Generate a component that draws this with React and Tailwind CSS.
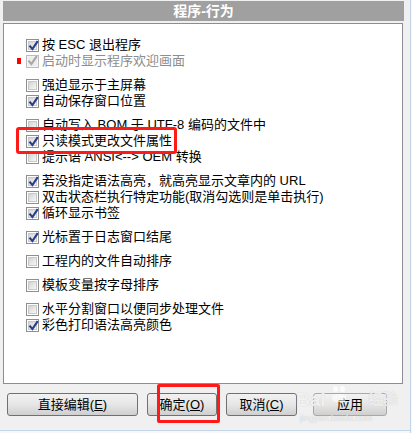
import React from 'react';

const FONT = { fontFamily: '"Liberation Sans", "Noto Sans CJK SC", sans-serif' };

const groups = [
  [
    { label: '按 ESC 退出程序', checked: true },
    { label: '启动时显示程序欢迎画面', checked: true, disabled: true, marker: true },
  ],
  [
    { label: '强迫显示于主屏幕', checked: false },
    { label: '自动保存窗口位置', checked: true },
  ],
  [
    { label: '自动写入 BOM 于 UTF-8 编码的文件中', checked: false },
    { label: '只读模式更改文件属性', checked: true },
    { label: '提示语 ANSI<--> OEM 转换', checked: false },
  ],
  [
    { label: '若没指定语法高亮，就高亮显示文章内的 URL', checked: true },
    { label: '双击状态栏执行特定功能(取消勾选则是单击执行)', checked: false },
    { label: '循环显示书签', checked: true },
  ],
  [{ label: '光标置于日志窗口结尾', checked: true }],
  [{ label: '工程内的文件自动排序', checked: false }],
  [{ label: '模板变量按字母排序', checked: false }],
  [
    { label: '水平分割窗口以便同步处理文件', checked: false },
    { label: '彩色打印语法高亮颜色', checked: true },
  ],
];

function CheckBox({ checked, disabled }) {
  return (
    <div
      className={`w-[13px] h-[13px] border flex items-center justify-center shrink-0 ${
        disabled ? 'border-[#bcbcbc] bg-[#f4f4f4]' : 'border-[#8e8f8f] bg-white'
      }`}
    >
      <div
        className={`w-[9px] h-[9px] relative ${
          disabled
            ? 'bg-[#ececec]'
            : 'bg-gradient-to-br from-[#d3d3d3] to-[#f8f8f8] border border-[#c9c9c9]'
        }`}
      >
        {checked && (
          <svg
            viewBox="0 0 9 9"
            className="absolute left-[-1px] top-[-2px] w-[11px] h-[11px]"
          >
            <path
              d="M1.2 4.6 L3.6 7.4 L8 1"
              fill="none"
              stroke={disabled ? '#a8a8a8' : '#2a3f8f'}
              strokeWidth="1.8"
            />
          </svg>
        )}
      </div>
    </div>
  );
}

function Row({ item }) {
  return (
    <div className="h-[16px] flex items-center relative">
      {item.marker && (
        <div className="absolute left-[-9px] top-[5px] w-[4px] h-[6px] bg-[#ff0000]" />
      )}
      <CheckBox checked={item.checked} disabled={item.disabled} />
      <span
        className={`ml-[3px] text-[13px] leading-[16px] whitespace-nowrap ${
          item.disabled ? 'text-[#8d8d8d]' : 'text-black'
        }`}
      >
        {item.label}
      </span>
    </div>
  );
}

function Btn({ width, label, hotkey, className = '' }) {
  return (
    <button
      className={`h-[23px] rounded-[3px] border border-[#707070] bg-gradient-to-b from-[#f2f2f2] via-[#e6e6e6] to-[#cfcfcf] text-[13px] leading-[16px] text-black flex items-center justify-center ${width} ${className}`}
    >
      {label}
      {hotkey && (
        <>
          (<span className="underline underline-offset-1">{hotkey}</span>)
        </>
      )}
    </button>
  );
}

export default function App() {
  return (
    <div className="w-[412px] h-[433px] bg-[#f0f0f0] flex overflow-hidden relative" style={FONT}>
      <div className="w-[410px] flex flex-col">
        {/* title */}
        <div className="mt-[1px] ml-[3px] w-[401px] h-[20px] bg-[#a0a0a0] flex items-center justify-center">
          <span className="text-white font-bold text-[14px] leading-[16px]">程序-行为</span>
        </div>

        {/* options panel */}
        <div className="mt-[2px] ml-[3px] w-[400px] h-[361px] border border-[#8d8d93] bg-white pt-[13px] pl-[22px] flex flex-col gap-[8px]">
          {groups.map((g, i) => (
            <div key={i} className="flex flex-col">
              {g.map((item) => (
                <Row key={item.label} item={item} />
              ))}
            </div>
          ))}
        </div>

        {/* buttons */}
        <div className="mt-[9px] pl-[7px] flex">
          <Btn width="w-[131px]" label="直接编辑" hotkey="E" />
          <Btn width="w-[70px]" label="确定" hotkey="O" className="ml-[9px]" />
          <Btn width="w-[71px]" label="取消" hotkey="C" className="ml-[9px]" />
          <Btn width="w-[74px]" label="应用" className="ml-[16px] border-[#a8a8a8]" />
        </div>

        <div className="flex-1" />
        <div className="h-[1px] bg-[#c3d6ea]" />
        <div className="h-[2px] bg-[#f7f7f7]" />
      </div>
      <div className="w-[1px] bg-[#c3d6ea]" />
      <div className="w-[1px] bg-[#f7f7f7]" />

      {/* red highlight boxes */}
      <div className="absolute left-[16px] top-[127px] w-[161px] h-[27px] border-[3px] border-[#ff1a1a] rounded-[3px]" />
      <div className="absolute left-[157px] top-[384px] w-[63px] h-[39px] border-[3px] border-[#ff1a1a] rounded-[2px]" />

      {/* watermark */}
      <div className="absolute left-[296px] top-[390px] text-white/75 font-bold text-[19px] leading-[20px] pointer-events-none [text-shadow:0_0_1px_#c4c4c4]">
        Bai
      </div>
      <div className="absolute left-[368px] top-[391px] text-white/70 font-bold text-[15px] leading-[16px] pointer-events-none [text-shadow:0_0_1px_#c4c4c4]">
        经验
      </div>
      <div className="absolute left-[333px] top-[386px] flex gap-[2px] pointer-events-none">
        <div className="w-[5px] h-[6px] rounded-full bg-white/75" />
        <div className="w-[5px] h-[6px] rounded-full bg-white/75" />
      </div>
      <div className="absolute left-[332px] top-[394px] w-[14px] h-[8px] rounded-full bg-white/60 pointer-events-none" />
      <div className="absolute left-[300px] top-[413px] text-white/70 text-[9px] leading-[10px] pointer-events-none [text-shadow:0_0_1px_#bbb]">
        jingyan.baidu.com
      </div>
    </div>
  );
}
